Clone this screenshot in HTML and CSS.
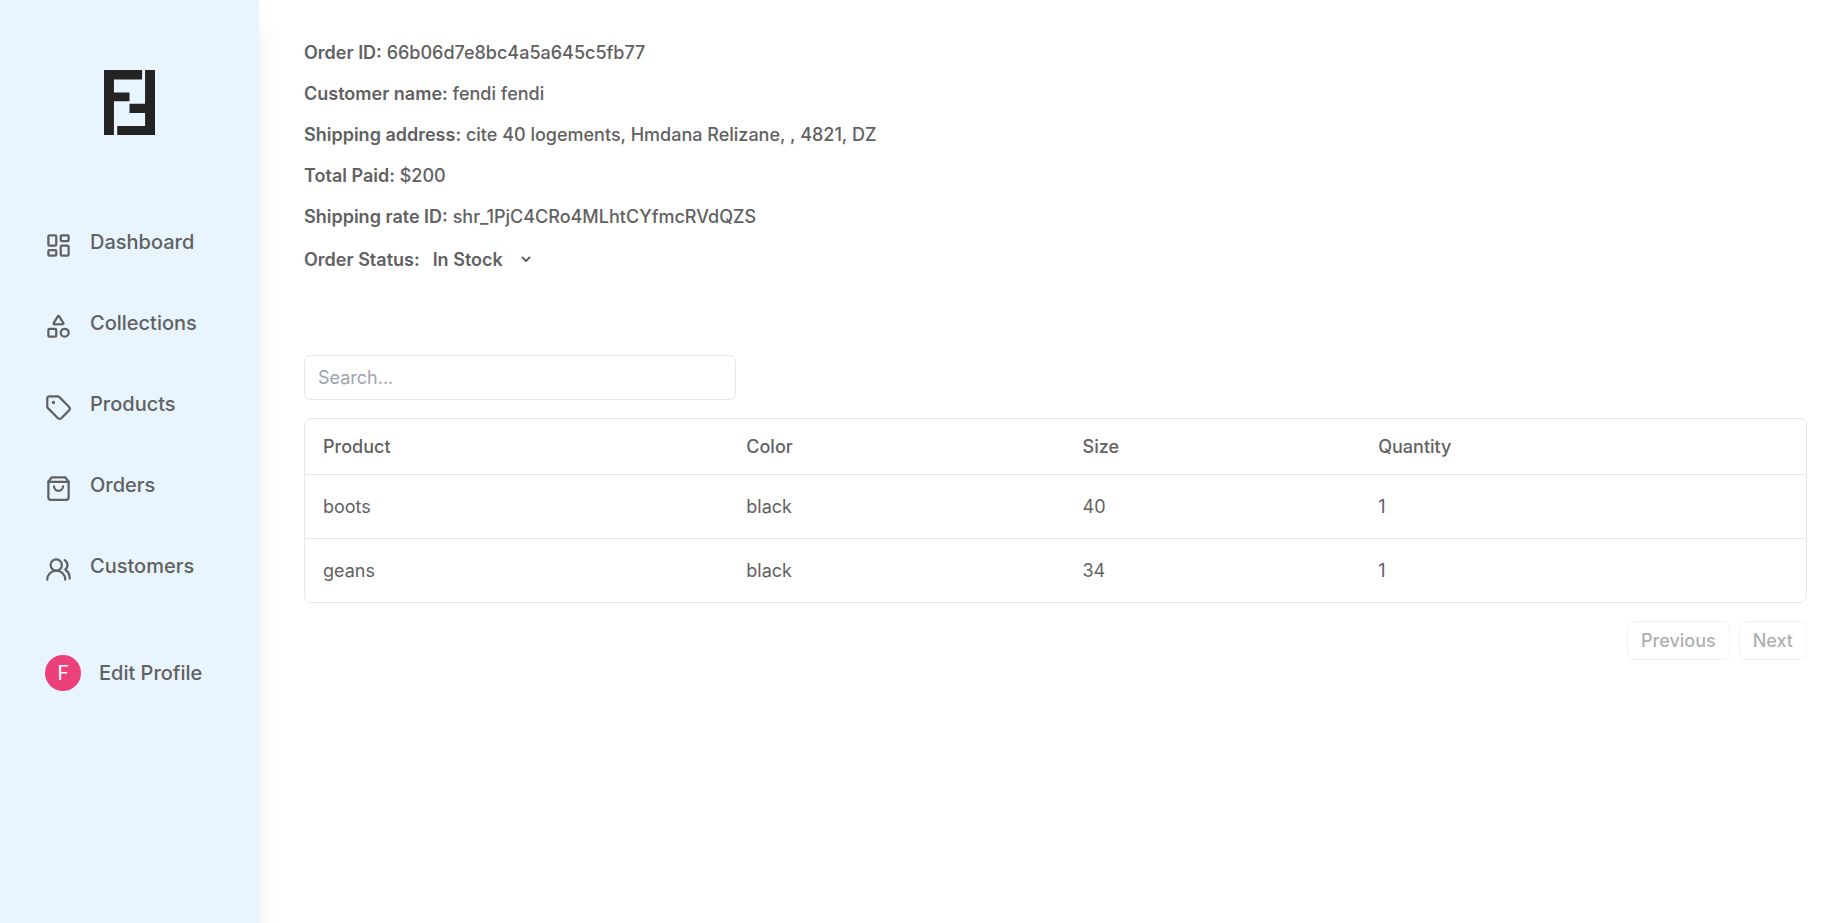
FILE: index.html
```html
<!DOCTYPE html>
<html lang="en">
<head>
  <meta charset="UTF-8" />
  <meta name="viewport" content="width=device-width, initial-scale=1.0" />
  <title>Order Details</title>
  <link rel="stylesheet" href="styles.css">
</head>
<body>
  <aside class="sidebar">
    <a class="logo" href="#" aria-label="Home">
      <svg width="51" height="65" viewBox="0 0 154 194" preserveAspectRatio="none" fill="#232323">
        <path d="M0 0H115V28H30V67H77V93H30V194H0Z" />
        <path d="M124 0H154V194H40V167H124V128H77V101H124Z" />
      </svg>
    </a>
    <nav class="nav">
      <a class="nav-link" href="#">
        <svg class="icon" viewBox="0 0 24 24"><rect width="7" height="9" x="3" y="3" rx="1" /><rect width="7" height="5" x="14" y="3" rx="1" /><rect width="7" height="9" x="14" y="12" rx="1" /><rect width="7" height="5" x="3" y="16" rx="1" /></svg>
        <span>Dashboard</span>
      </a>
      <a class="nav-link" href="#">
        <svg class="icon" viewBox="0 0 24 24"><path d="M8.3 10a.7.7 0 0 1-.626-1.079L11.4 3a.7.7 0 0 1 1.198-.043L16.3 8.9a.7.7 0 0 1-.572 1.1Z" /><rect x="3" y="14" width="7" height="7" rx="1" /><circle cx="17.5" cy="17.5" r="3.5" /></svg>
        <span>Collections</span>
      </a>
      <a class="nav-link" href="#">
        <svg class="icon" viewBox="0 0 24 24"><path d="M12.586 2.586A2 2 0 0 0 11.172 2H4a2 2 0 0 0-2 2v7.172a2 2 0 0 0 .586 1.414l8.704 8.704a2.426 2.426 0 0 0 3.42 0l6.58-6.58a2.426 2.426 0 0 0 0-3.42z" /><circle cx="7.5" cy="7.5" r=".5" fill="currentColor" /></svg>
        <span>Products</span>
      </a>
      <a class="nav-link" href="#">
        <svg class="icon" viewBox="0 0 24 24"><path d="M6 2 3 6v14a2 2 0 0 0 2 2h14a2 2 0 0 0 2-2V6l-3-4Z" /><path d="M3 6h18" /><path d="M16 10a4 4 0 0 1-8 0" /></svg>
        <span>Orders</span>
      </a>
      <a class="nav-link" href="#">
        <svg class="icon" viewBox="0 0 24 24"><path d="M18 21a8 8 0 0 0-16 0" /><circle cx="10" cy="8" r="5" /><path d="M22 20c0-3.37-2-6.5-4-8a5 5 0 0 0-.45-8.3" /></svg>
        <span>Customers</span>
      </a>
    </nav>
    <a class="profile" href="#">
      <span class="avatar">F</span>
      <span>Edit Profile</span>
    </a>
  </aside>

  <main class="content">
    <section class="order">
      <p><b>Order ID:</b> 66b06d7e8bc4a5a645c5fb77</p>
      <p><b>Customer name:</b> fendi fendi</p>
      <p><b>Shipping address:</b> cite 40 logements, Hmdana Relizane, , 4821, DZ</p>
      <p><b>Total Paid:</b> $200</p>
      <p><b>Shipping rate ID:</b> shr_1PjC4CRo4MLhtCYfmcRVdQZS</p>
      <div class="status">
        <label for="status">Order Status:</label>
        <div class="select-wrap">
          <select id="status">
            <option selected>In Stock</option>
            <option>Shipped</option>
            <option>Delivered</option>
          </select>
          <svg class="chevron" viewBox="0 0 10 6"><path d="M1 1l4 4 4-4" /></svg>
        </div>
      </div>
    </section>

    <input class="search" type="text" placeholder="Search..." aria-label="Search" />

    <div class="table-box">
      <table>
        <thead>
          <tr>
            <th class="col-product">Product</th>
            <th class="col-color">Color</th>
            <th class="col-size">Size</th>
            <th>Quantity</th>
          </tr>
        </thead>
        <tbody>
          <tr>
            <td>boots</td>
            <td>black</td>
            <td>40</td>
            <td>1</td>
          </tr>
          <tr>
            <td>geans</td>
            <td>black</td>
            <td>34</td>
            <td>1</td>
          </tr>
        </tbody>
      </table>
    </div>

    <div class="pagination">
      <button type="button" disabled>Previous</button>
      <button type="button" disabled>Next</button>
    </div>
  </main>
</body>
</html>
```
FILE: styles.css
```css
:root {
  --text: #616161;
  --sidebar: #e8f4fe;
  --border: #e5e7eb;
  --muted: #9ca3af;
  --pink: #ec407a;
}
* {
  margin: 0;
  padding: 0;
  box-sizing: border-box;
}
body {
  display: flex;
  min-height: 100vh;
  background: #fff;
  color: var(--text);
  font-family: Inter, sans-serif;
  font-size: 18px;
}
a {
  color: inherit;
  text-decoration: none;
}
b {
  font-weight: 600;
}

/* Sidebar */
.sidebar {
  flex: none;
  width: 259px;
  padding: 45px;
  display: flex;
  flex-direction: column;
  gap: 72px;
  background: var(--sidebar);
  box-shadow: 0 22px 28px -6px rgba(0, 0, 0, 0.1), 0 9px 11px -7px rgba(0, 0, 0, 0.1);
  font-size: 20px;
  font-weight: 500;
  line-height: 20px;
}
.logo {
  display: flex;
  align-items: center;
  justify-content: center;
  height: 115px;
}
.nav {
  display: flex;
  flex-direction: column;
  gap: 54px;
}
.nav-link {
  display: flex;
  gap: 18px;
}
.icon {
  width: 27px;
  height: 27px;
  fill: none;
  stroke: currentColor;
  stroke-width: 2;
  stroke-linecap: round;
  stroke-linejoin: round;
}
.profile {
  display: flex;
  align-items: center;
  gap: 18px;
  white-space: nowrap;
}
.avatar {
  display: flex;
  align-items: center;
  justify-content: center;
  width: 36px;
  height: 36px;
  border-radius: 50%;
  background: var(--pink);
  color: #fff;
  font-family: Roboto, sans-serif;
  font-weight: 400;
}

/* Order */
.content {
  flex: 1;
  min-width: 0;
  padding: 43px 40px 43px 45px;
}
.order {
  display: flex;
  flex-direction: column;
  gap: 22px;
  margin-bottom: 85px;
  font-weight: 500;
  line-height: 19px;
}
.status {
  display: flex;
  align-items: center;
  gap: 13px;
  height: 22px;
  font-weight: 600;
}
.select-wrap {
  display: grid;
  align-items: center;
}
.select-wrap select,
.chevron {
  grid-area: 1 / 1;
}
.select-wrap select {
  appearance: none;
  width: 98px;
  border: none;
  background: transparent;
  color: inherit;
  font: inherit;
}
.chevron {
  justify-self: end;
  width: 10px;
  height: 6px;
  fill: none;
  stroke: currentColor;
  stroke-width: 2;
  pointer-events: none;
}

/* Table */
.search {
  display: block;
  width: 100%;
  max-width: 432px;
  height: 45px;
  margin-bottom: 18px;
  padding: 0 13px;
  border: 1px solid var(--border);
  border-radius: 7px;
  color: inherit;
  font: inherit;
}
.search::placeholder {
  color: var(--muted);
}
.table-box {
  border: 1px solid var(--border);
  border-radius: 7px;
}
table {
  width: 100%;
  border-collapse: collapse;
  table-layout: fixed;
  line-height: 27px;
  text-align: left;
}
th {
  height: 55px;
  padding: 0 18px;
  font-weight: 500;
}
td {
  padding: 18px;
}
tr:not(:last-child) td,
th {
  border-bottom: 1px solid var(--border);
}
.col-product {
  width: 28.2%;
}
.col-color {
  width: 22.4%;
}
.col-size {
  width: 19.7%;
}
.pagination {
  display: flex;
  justify-content: flex-end;
  gap: 9px;
  padding-top: 18px;
}
.pagination button {
  height: 39px;
  padding: 0 13px;
  border: 1px solid var(--border);
  border-radius: 7px;
  background: #fff;
  color: inherit;
  font: inherit;
  font-weight: 500;
  opacity: 0.5;
}
```
